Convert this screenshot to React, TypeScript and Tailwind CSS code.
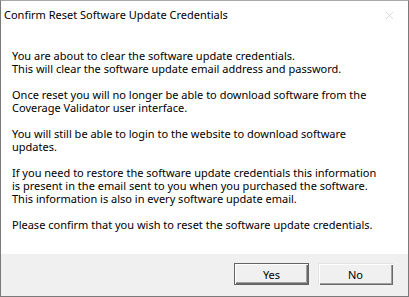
import { X } from 'lucide-react';

const paragraphs = [
  ['You are about to clear the software update credentials.', 'This will clear the software update email address and password.'],
  ['Once reset you will no longer be able to download software from the', 'Coverage Validator user interface.'],
  ['You will still be able to login to the website to download software', 'updates.'],
  [
    'If you need to restore the software update credentials this information',
    'is present in the email sent to you when you purchased the software.',
    'This information is also in every software update email.',
  ],
  ['Please confirm that you wish to reset the software update credentials.'],
];

const btn =
  'w-[75px] h-[22px] bg-[#f0f0f0] text-[11px] leading-none text-black flex items-center justify-center';

const App = () => {
  return (
    <div
      className="w-[409px] h-[297px] flex flex-col bg-white border border-[#7a7a7a] border-t-[#a8a8a8] overflow-hidden"
      style={{ fontFamily: '"Noto Sans", "Open Sans", sans-serif' }}
    >
      {/* title bar */}
      <div className="h-[29px] flex items-center justify-between pl-[3px] pr-[12px] shrink-0">
        <span className="text-[11px] text-black">Confirm Reset Software Update Credentials</span>
        <X className="w-[13px] h-[13px] text-[#c8c8c8]" strokeWidth={1.2} />
      </div>

      {/* message */}
      <div className="flex-1 pl-[11px] pt-[19px] text-[11px] leading-[13px] text-black flex flex-col gap-[13px]">
        {paragraphs.map((p, i) => (
          <div key={i}>
            {p.map((line, j) => (
              <div key={j} className="whitespace-nowrap">{line}</div>
            ))}
          </div>
        ))}
      </div>

      {/* buttons */}
      <div className="h-[42px] shrink-0 bg-[#f0f0f0] flex justify-end items-start pt-[9px] pr-[15px] gap-[9px]">
        <button className={`${btn} border border-[#646464] shadow-[inset_1px_1px_0_#fff,inset_-1px_-1px_0_#696969,inset_-2px_-2px_0_#a0a0a0]`}>
          Yes
        </button>
        <button className={`${btn} shadow-[inset_1px_1px_0_#e3e3e3,inset_2px_2px_0_#fff,inset_-1px_-1px_0_#696969,inset_-2px_-2px_0_#a0a0a0]`}>
          No
        </button>
      </div>
    </div>
  );
};

export default App;
